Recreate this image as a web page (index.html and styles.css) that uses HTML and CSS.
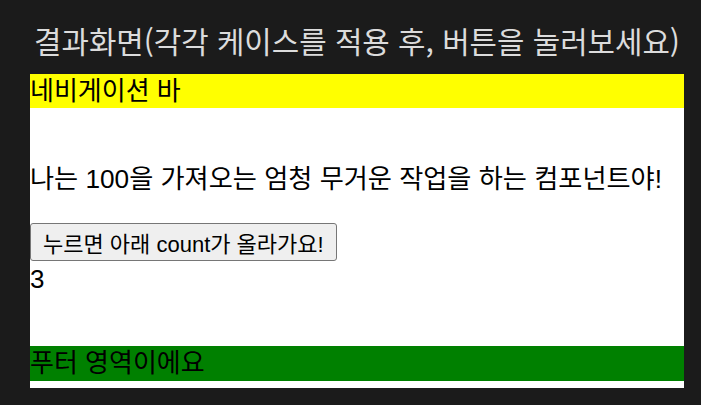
FILE: index.html
```html
<!DOCTYPE html>
<html lang="ko">
<head>
  <meta charset="UTF-8" />
  <meta name="viewport" content="width=device-width, initial-scale=1.0"/>
  <title>결과화면</title>
  <link rel="stylesheet" href="styles.css">
</head>
<body>
  <h2 class="title">결과화면(각각 케이스를 적용 후, 버튼을 눌러보세요)</h2>

  <div class="result">
    <div class="nav">네비게이션 바</div>

    <div class="content">
      <p class="heavy">나는 100을 가져오는 엄청 무거운 작업을 하는 컴포넌트야!</p>
      <button class="count-btn">누르면 아래 count가 올라가요!</button>
      <div class="count">3</div>
    </div>

    <div class="footer">푸터 영역이에요</div>
  </div>
</body>
</html>
```

FILE: styles.css
```css
body {
  margin: 0;
  padding: 0 17px 0 30px;
  background: #1b1b1b;
  font-family: "Liberation Sans", "Noto Sans CJK KR", sans-serif;
}

.title {
  margin: 0;
  height: 74px;
  line-height: 80px;
  font-family: "Noto Sans CJK KR", sans-serif;
  font-size: 29.8px;
  font-weight: normal;
  color: #dcdcdc;
  text-align: center;
  white-space: nowrap;
}

.result {
  background: #fff;
  color: #000;
  padding-bottom: 7px;
}

.nav {
  background: yellow;
  height: 34px;
  line-height: 34px;
  font-size: 26px;
}

.content {
  padding-top: 54px;
  height: 184px;
}

.heavy {
  margin: 0 0 27px;
  line-height: 34px;
  font-size: 26.2px;
}

.count-btn {
  display: block;
  height: 38px;
  padding: 0 12px;
  font-family: inherit;
  font-size: 22px;
  color: #000;
  background: #efefef;
  border: 1px solid #767676;
  border-radius: 3px;
}

.count {
  font-size: 26px;
  line-height: 34px;
  margin-top: 1px;
}

.footer {
  background: green;
  height: 35px;
  line-height: 35px;
  font-size: 26px;
}
```
